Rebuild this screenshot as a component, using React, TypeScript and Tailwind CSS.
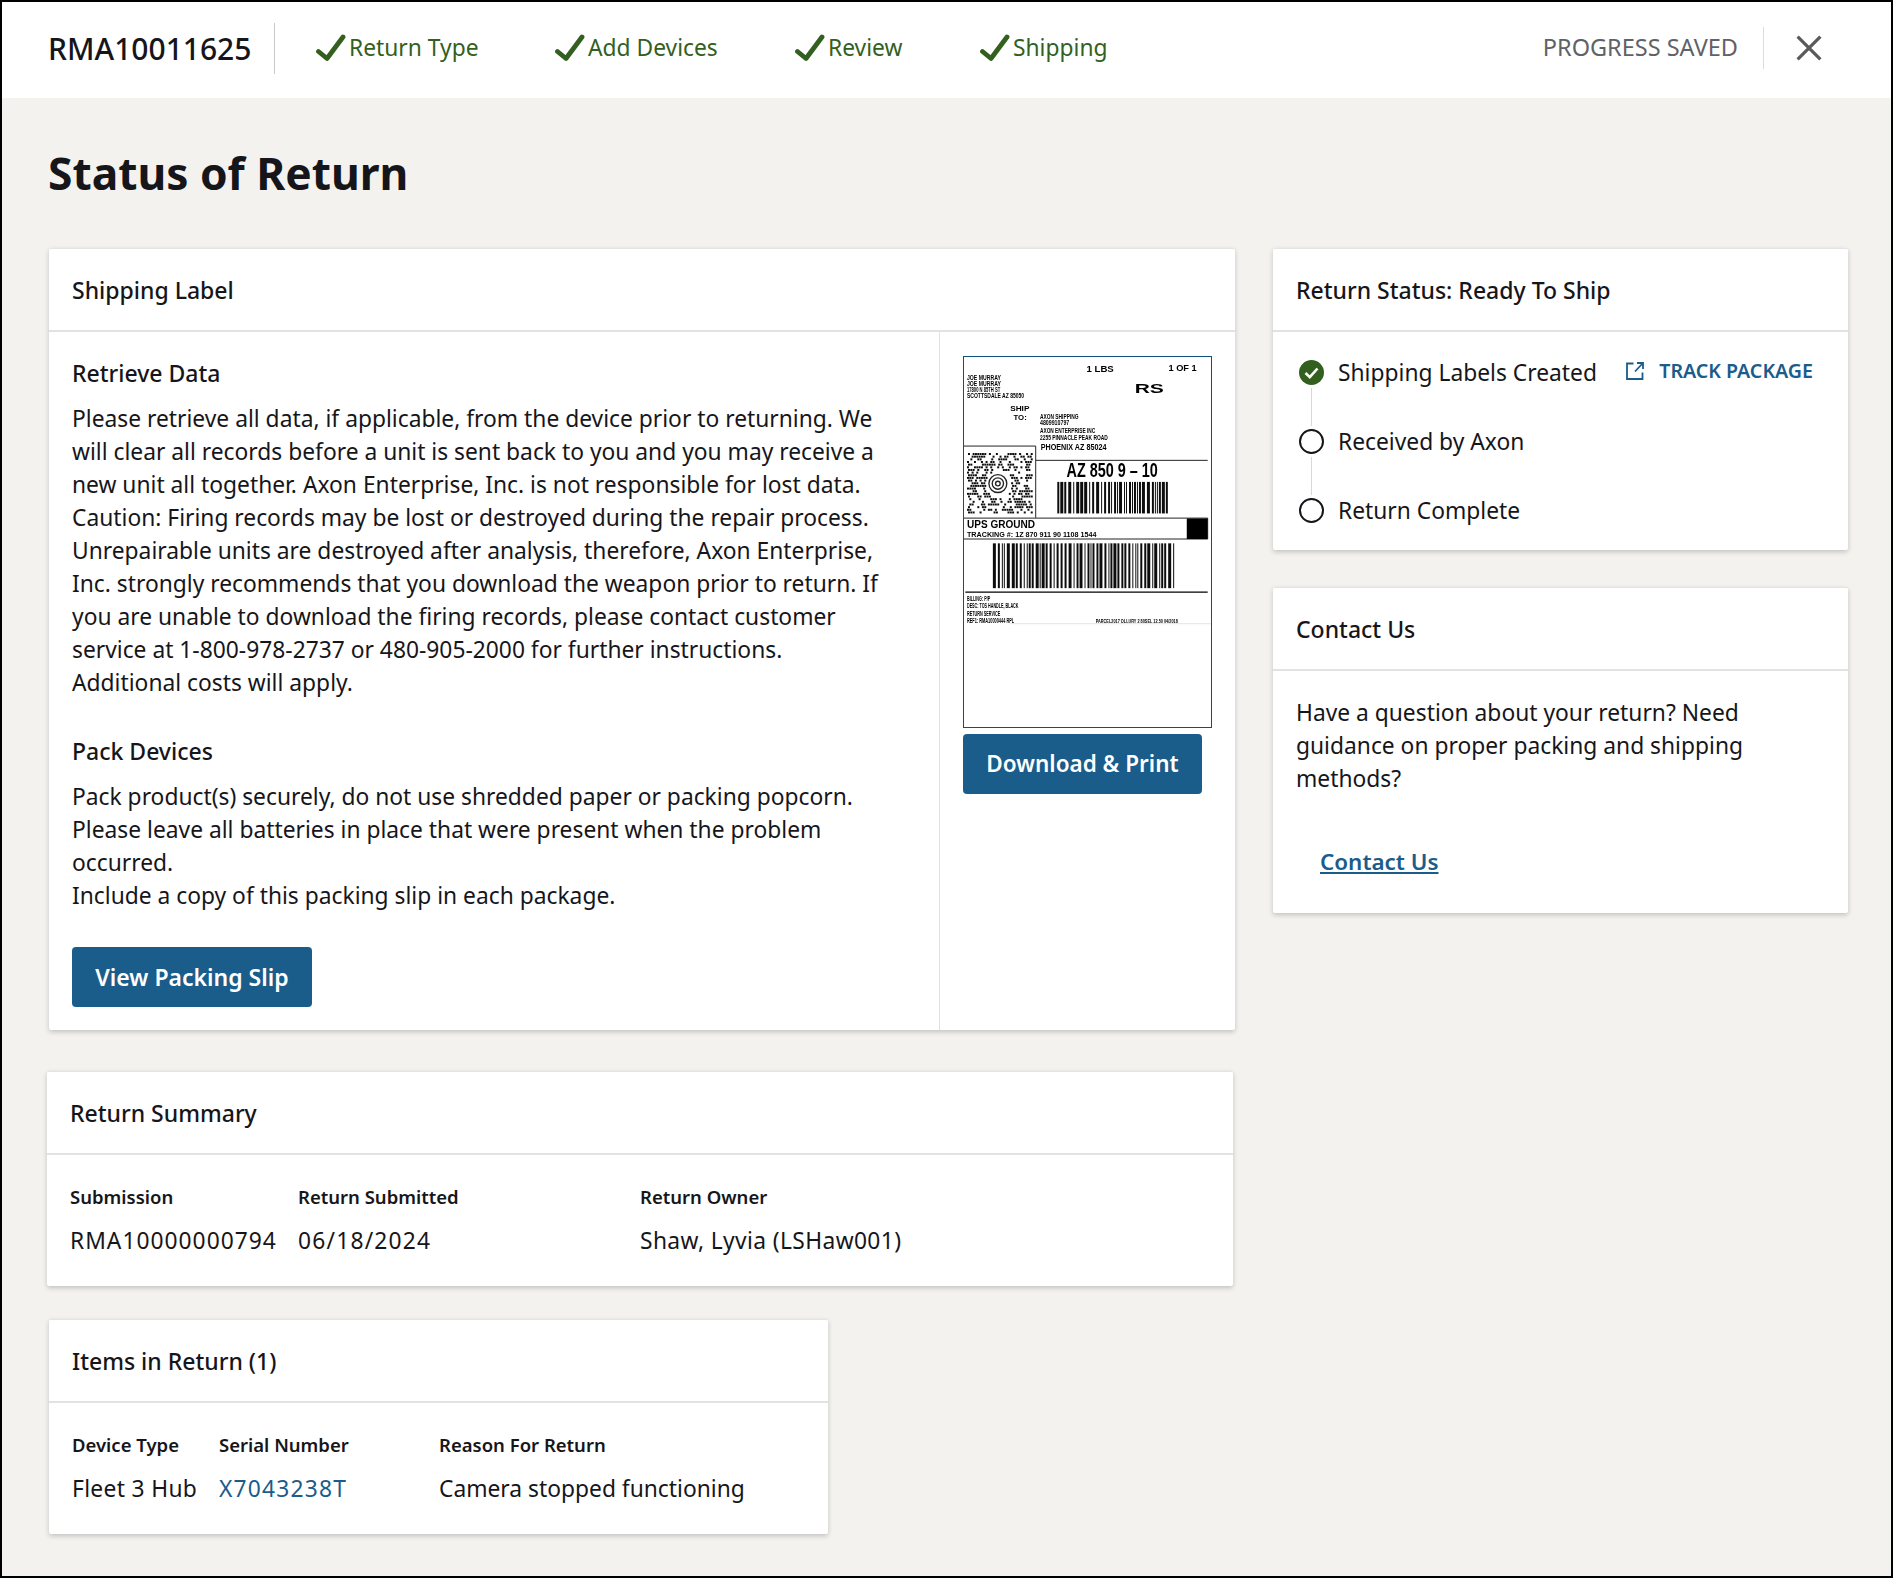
import React from 'react';

const steps = [
  { label: 'Return Type', width: 'w-[239px]' },
  { label: 'Add Devices', width: 'w-[240px]' },
  { label: 'Review', width: 'w-[185px]' },
  { label: 'Shipping', width: 'w-[140px]' },
];

// seeded so the barcodes and the maxicode stay the same between renders
const rand = (seed: number) => {
  let s = seed;
  return () => {
    s = (s * 1103515245 + 12345) & 0x7fffffff;
    return s / 0x7fffffff;
  };
};

const bars = (x0: number, x1: number, seed: number) => {
  const r = rand(seed);
  const out: { x: number; w: number }[] = [];
  let x = x0;
  while (x < x1) {
    const w = 3 + Math.floor(r() * 3) * 3;
    out.push({ x, w: Math.min(w, x1 - x) });
    x += w + 3 + Math.floor(r() * 2) * 3;
  }
  return out;
};

const code1 = bars(322, 655, 11);
const code2 = bars(128, 678, 29);

const maxi = (() => {
  const r = rand(7);
  const out: { x: number; y: number }[] = [];
  for (let y = 338; y < 520; y += 8) {
    for (let x = 50; x < 242; x += 7) {
      const d = Math.hypot(x - 143, y - 430);
      if (d > 40 && r() > 0.5) out.push({ x: x + (y % 16 === 2 ? 3 : 0), y });
    }
  }
  return out;
})();

const CheckMark = () => (
  <svg viewBox="0 0 30 28" className="w-[30px] h-[28px] shrink-0">
    <path d="M2.5 17.5L11 24.5L27 3" fill="none" stroke="#33601e" strokeWidth="4.8" strokeLinecap="round" strokeLinejoin="round" />
  </svg>
);

const ShippingLabelImage = () => (
  <svg
    viewBox="41 49 744 1114"
    className="block w-[249px] h-[372px] border border-[#0f4f7d] bg-white"
    fontFamily="'Liberation Sans', sans-serif"
  >
    <defs>
      <filter id="soft">
        <feGaussianBlur stdDeviation="0.8" />
      </filter>
    </defs>
    <g filter="url(#soft)">
      <g fill="#000" fontWeight="700">
        <text x="410" y="93" fontSize="29" textLength="82" lengthAdjust="spacingAndGlyphs">1 LBS</text>
        <text x="657" y="91" fontSize="27" textLength="85" lengthAdjust="spacingAndGlyphs">1 OF 1</text>
        <text x="555" y="157" fontSize="38" textLength="88" lengthAdjust="spacingAndGlyphs">RS</text>
        <text x="180" y="212" fontSize="23" textLength="58" lengthAdjust="spacingAndGlyphs">SHIP</text>
        <text x="190" y="240" fontSize="23" textLength="40" lengthAdjust="spacingAndGlyphs">TO:</text>
        <text x="50" y="118" fontSize="20" textLength="102" lengthAdjust="spacingAndGlyphs">JOE MURRAY</text>
        <text x="50" y="135" fontSize="20" textLength="102" lengthAdjust="spacingAndGlyphs">JOE MURRAY</text>
        <text x="50" y="153" fontSize="20" textLength="100" lengthAdjust="spacingAndGlyphs">17800 N 85TH ST</text>
        <text x="50" y="172" fontSize="20" textLength="172" lengthAdjust="spacingAndGlyphs">SCOTTSDALE AZ 85050</text>
        <text x="270" y="235" fontSize="22" textLength="116" lengthAdjust="spacingAndGlyphs">AXON SHIPPING</text>
        <text x="270" y="255" fontSize="22" textLength="88" lengthAdjust="spacingAndGlyphs">4809910797</text>
        <text x="270" y="277" fontSize="22" textLength="166" lengthAdjust="spacingAndGlyphs">AXON ENTERPRISE INC</text>
        <text x="270" y="300" fontSize="22" textLength="204" lengthAdjust="spacingAndGlyphs">2255 PINNACLE PEAK ROAD</text>
        <text x="272" y="328" fontSize="28" textLength="198" lengthAdjust="spacingAndGlyphs">PHOENIX AZ 85024</text>
        <text x="350" y="410" fontSize="62" textLength="275" lengthAdjust="spacingAndGlyphs">AZ 850 9 – 10</text>
        <text x="50" y="565" fontSize="31" textLength="205" lengthAdjust="spacingAndGlyphs">UPS GROUND</text>
        <text x="50" y="592" fontSize="23" textLength="390" lengthAdjust="spacingAndGlyphs">TRACKING #:   1Z 870 911 90 1108 1544</text>
        <text x="50" y="785" fontSize="24" textLength="70" lengthAdjust="spacingAndGlyphs">BILLING: P/P</text>
        <text x="50" y="806" fontSize="24" textLength="155" lengthAdjust="spacingAndGlyphs">DESC: TOS HANDLE, BLACK</text>
        <text x="50" y="828" fontSize="24" textLength="100" lengthAdjust="spacingAndGlyphs">RETURN SERVICE</text>
        <text x="50" y="849" fontSize="24" textLength="142" lengthAdjust="spacingAndGlyphs">REF1: RMA10000444 RPL</text>
        <text x="438" y="851" fontSize="16" textLength="247" lengthAdjust="spacingAndGlyphs">PARCEL2017 OLLURY 2 80SEL 12.50 04/2018</text>
      </g>
      <g stroke="#222" fill="none">
        <path d="M41 317H257V533M257 360H775M41 534H775M775 534V597M41 597H775" strokeWidth="3" />
        <path d="M45 757H775" strokeWidth="4" stroke="#000" />
        <circle cx="143" cy="430" r="27" strokeWidth="4" />
        <circle cx="143" cy="430" r="17" strokeWidth="4" />
        <circle cx="143" cy="430" r="7" strokeWidth="4" />
      </g>
      <path d="M180 852H785" stroke="#fbdcdc" strokeWidth="3" />
      <rect x="712" y="535" width="63" height="62" fill="#000" />
      <g fill="#111">
        {maxi.map((m, i) => (
          <rect key={i} x={m.x} y={m.y} width="6" height="6" />
        ))}
        {code1.map((b, i) => (
          <rect key={i} x={b.x} y="425" width={b.w} height="95" />
        ))}
        {code2.map((b, i) => (
          <rect key={i} x={b.x} y="610" width={b.w} height="135" />
        ))}
      </g>
    </g>
  </svg>
);

const Card = ({ title, className = '', children }: { title: string; className?: string; children: React.ReactNode }) => (
  <section className={`bg-white rounded-[2px] border-t border-[#e4e4e4] shadow-[0_2px_5px_rgba(0,0,0,0.2)] ${className}`}>
    <h2 className="h-[83px] flex items-center px-[23px] pt-[2px] border-b-2 border-[#e2e2e2] text-[23px] font-medium text-[#16161a]">{title}</h2>
    {children}
  </section>
);

const Field = ({ label, width, children }: { label: string; width?: string; children: React.ReactNode }) => (
  <div className={width}>
    <div className="text-[18.5px] leading-[24px] font-semibold text-[#16161a]">{label}</div>
    <div className="mt-[15px] text-[22.8px] leading-[33px] text-[#16161a]">{children}</div>
  </div>
);

const StatusCircle = ({ done }: { done?: boolean }) =>
  done ? (
    <svg viewBox="0 0 25 25" className="w-[25px] h-[25px] shrink-0">
      <circle cx="12.5" cy="12.5" r="12.5" fill="#33601e" />
      <path d="M6.5 13 L10.8 17.2 L18.5 8.5" fill="none" stroke="#fff" strokeWidth="2.6" />
    </svg>
  ) : (
    <span className="block w-[25px] h-[25px] shrink-0 rounded-full border-[2.5px] border-[#16161a]" />
  );

export default function App() {
  return (
    <div className="h-[1578px] border-2 border-black bg-[#f3f2ef] font-['Noto_Sans',sans-serif] text-[#16161a] overflow-hidden">
      <header className="h-[96px] bg-white flex items-center pl-[46px] pr-[69px] pb-[4px]">
        <div className="w-[227px] h-[51px] flex items-center border-r border-[#c9c9c9] text-[30px] font-medium">RMA10011625</div>
        <div className="flex items-center ml-[41px]">
          {steps.map((s) => (
            <div key={s.label} className={`flex items-center gap-[3px] text-[22.8px] text-[#33601e] ${s.width}`}>
              <CheckMark />
              <span>{s.label}</span>
            </div>
          ))}
        </div>
        <div className="ml-auto flex items-center">
          <span className="text-[23.5px] text-[#5f6266]">PROGRESS SAVED</span>
          <div className="w-px h-[42px] bg-[#dcdcdc] ml-[25px] mr-[32px]" />
          <svg viewBox="0 0 24 24" className="w-[26px] h-[26px]">
            <path d="M1.5 1.5L22.5 22.5M22.5 1.5L1.5 22.5" stroke="#5a5a5a" strokeWidth="3" fill="none" />
          </svg>
        </div>
      </header>

      <main className="pl-[45px] pr-[43px]">
        <h1 className="pt-[47px] pl-[1px] mb-[47px] text-[44.3px] leading-[56px] font-bold">Status of Return</h1>
        <div className="flex gap-[38px] items-start">
          <div className="w-[1188px] shrink-0">
            <Card title="Shipping Label" className="ml-[2px]">
              <div className="flex">
                <div className="w-[891px] border-r border-[#e2e2e2] pl-[23px] pr-[41px] pt-[25px] pb-[23px]">
                  <h3 className="text-[23px] leading-[33px] font-medium">Retrieve Data</h3>
                  <p className="mt-[12px] text-[22.8px] leading-[33px]">
                    Please retrieve all data, if applicable, from the device prior to returning. We will clear all records before a unit is sent back to you and you may receive a new unit all together. Axon Enterprise, Inc. is not responsible for lost data.<br />
                    Caution: Firing records may be lost or destroyed during the repair process. Unrepairable units are destroyed after analysis, therefore, Axon Enterprise, Inc. strongly recommends that you download the weapon prior to return. If you are unable to download the firing records, please contact customer service at 1-800-978-2737 or 480-905-2000 for further instructions.<br />
                    Additional costs will apply.
                  </p>
                  <h3 className="mt-[36px] text-[23px] leading-[33px] font-medium">Pack Devices</h3>
                  <p className="mt-[12px] text-[22.8px] leading-[33px]">
                    Pack product(s) securely, do not use shredded paper or packing popcorn.<br />
                    Please leave all batteries in place that were present when the problem occurred.<br />
                    Include a copy of this packing slip in each package.
                  </p>
                  <button className="block mt-[35px] w-[240px] h-[60px] rounded-[4px] bg-[#1a5c8a] text-white text-[23px] font-semibold">View Packing Slip</button>
                </div>
                <div className="pl-[23px] pt-[24px]">
                  <ShippingLabelImage />
                  <button className="block mt-[6px] w-[239px] h-[60px] rounded-[4px] bg-[#1a5c8a] text-white text-[22.5px] font-semibold">Download &amp; Print</button>
                </div>
              </div>
            </Card>

            <Card title="Return Summary" className="mt-[41px] w-[1186px]">
              <div className="flex pl-[23px] pt-[30px] pb-[29px]">
                <Field label="Submission" width="w-[228px]"><span className="tracking-[1px]">RMA10000000794</span></Field>
                <Field label="Return Submitted" width="w-[342px]"><span className="tracking-[1.2px]">06/18/2024</span></Field>
                <Field label="Return Owner"><span className="tracking-[0.38px]">Shaw, Lyvia (LSHaw001)</span></Field>
              </div>
            </Card>

            <Card title="Items in Return (1)" className="mt-[33px] ml-[2px] w-[779px]">
              <div className="flex pl-[23px] pt-[30px] pb-[29px]">
                <Field label="Device Type" width="w-[147px]"><span className="tracking-[0.33px]">Fleet 3 Hub</span></Field>
                <Field label="Serial Number" width="w-[220px]"><span className="tracking-[1.2px] text-[#1a5c8a]">X7043238T</span></Field>
                <Field label="Reason For Return">Camera stopped functioning</Field>
              </div>
            </Card>
          </div>

          <div className="w-[575px] shrink-0">
            <Card title="Return Status: Ready To Ship">
              <div className="pl-[26px] pr-[35px] pt-[28px] pb-[27px] text-[22.8px] leading-[25px]">
                <div className="flex">
                  <div className="flex flex-col items-center">
                    <StatusCircle done />
                    <div className="w-px h-[38px] my-[3px] bg-[#d8d8d8]" />
                  </div>
                  <span className="ml-[14px]">Shipping Labels Created</span>
                  <span className="ml-auto flex items-center gap-[15px] text-[19.6px] font-semibold text-[#1a5c8a] -mt-[2px] h-[25px]">
                    <svg viewBox="0 0 18 18" className="w-[18px] h-[18px]" fill="none" stroke="#1a5c8a" strokeWidth="1.8">
                      <path d="M7.5 1.5H1V17H16.5V10.5M9 9.5L16.5 1.5M11 1H17V7" />
                    </svg>
                    TRACK PACKAGE
                  </span>
                </div>
                <div className="flex">
                  <div className="flex flex-col items-center">
                    <StatusCircle />
                    <div className="w-px h-[38px] my-[3px] bg-[#d8d8d8]" />
                  </div>
                  <span className="ml-[14px]">Received by Axon</span>
                </div>
                <div className="flex">
                  <StatusCircle />
                  <span className="ml-[14px]">Return Complete</span>
                </div>
              </div>
            </Card>

            <Card title="Contact Us" className="mt-[37px]">
              <div className="pl-[23px] pr-[36px] pt-[25px] pb-[35px] text-[22.8px] leading-[33px]">
                <p>Have a question about your return? Need guidance on proper packing and shipping methods?</p>
                <a href="#" className="block mt-[50px] ml-[24px] font-semibold text-[22.4px] underline text-[#1a5c8a]">Contact Us</a>
              </div>
            </Card>
          </div>
        </div>
      </main>
    </div>
  );
}
